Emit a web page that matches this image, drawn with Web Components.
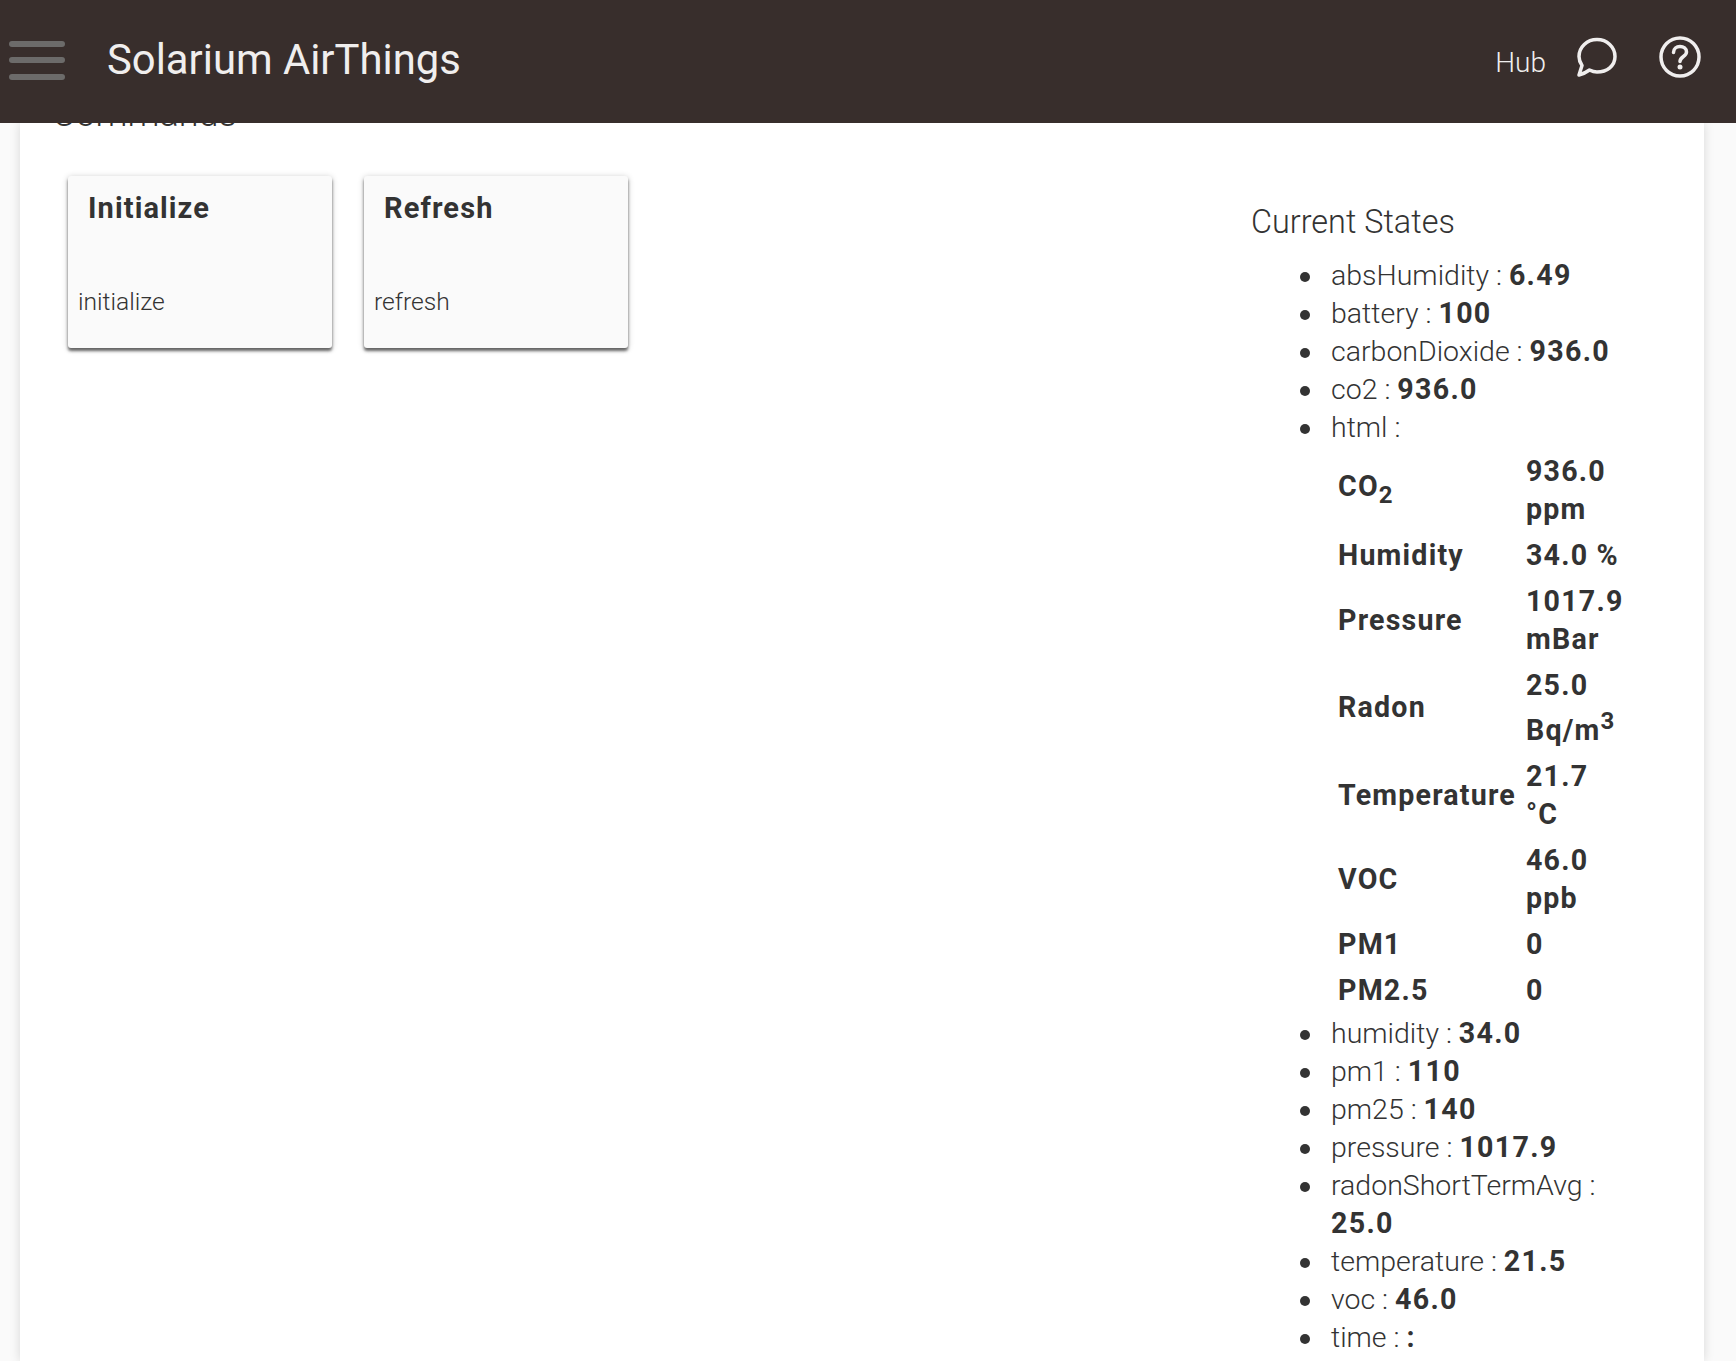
<!DOCTYPE html>
<html>
<head>
<meta charset="utf-8">
<title>Solarium AirThings</title>
<style>
  html, body { margin: 0; height: 100%; }
  body { overflow: hidden; background: #fafafa; font-family: Roboto, "Liberation Sans", sans-serif; color: #333; display: flex; flex-direction: column; }
</style>
</head>
<body>
<app-header title-text="Solarium AirThings" hub="Hub"></app-header>
<device-panel>
  <command-card slot="commands" name="Initialize" command="initialize"></command-card>
  <command-card slot="commands" name="Refresh" command="refresh"></command-card>
  <state-list slot="states">
    <state-item name="absHumidity" value="6.49"></state-item>
    <state-item name="battery" value="100"></state-item>
    <state-item name="carbonDioxide" value="936.0"></state-item>
    <state-item name="co2" value="936.0"></state-item>
    <state-item name="html" value=""></state-item>
    <air-table></air-table>
    <state-item name="humidity" value="34.0"></state-item>
    <state-item name="pm1" value="110"></state-item>
    <state-item name="pm25" value="140"></state-item>
    <state-item name="pressure" value="1017.9"></state-item>
    <state-item name="radonShortTermAvg" value="25.0"></state-item>
    <state-item name="temperature" value="21.5"></state-item>
    <state-item name="voc" value="46.0"></state-item>
    <state-item name="time" value=":"></state-item>
  </state-list>
</device-panel>

<script>
class AppHeader extends HTMLElement {
  constructor() {
    super();
    this.attachShadow({ mode: 'open' });
  }

  connectedCallback() {
    const title = this.getAttribute('title-text') || '';
    const hub = this.getAttribute('hub') || '';
    this.shadowRoot.innerHTML = `
      <style>
        :host {
          display: flex;
          align-items: center;
          flex: none;
          height: 123px;
          background: #382e2c;
          color: #f0eeee;
          position: relative;
          z-index: 2;
        }
        .burger {
          display: flex;
          flex-direction: column;
          gap: 10.500px;
          width: 56px;
          margin: 0 0 3px 9px;
        }
        .burger span {
          height: 6px;
          border-radius: 3px;
          background: #6c6b6a;
        }
        .title {
          font-size: 41.800px;
          font-weight: 400;
          margin: 0 0 5px 42px;
          flex: 1;
        }
        .hub {
          font-size: 28px;
          font-weight: 300;
          margin-top: 2px;
        }
        svg { display: block; fill: none; stroke: currentColor; }
        .chat { margin: 0 42px 9px 31px; }
        .help { margin: 0 35px 9px 0; }
      </style>
      <div class="burger"><span></span><span></span><span></span></div>
      <div class="title">${title}</div>
      <div class="hub">${hub}</div>
      <svg class="chat" width="40" height="40" viewBox="0 0 40 40" stroke-width="3.500" stroke-linejoin="round">
        <path d="M2 38 L5 28.500 C3 25.500 2 23 2 19.500 C2 10 10 2.500 20 2.500 C30 2.500 38 10 38 19.500 C38 29 30 35 20 35 C16.500 35 14.500 34 12.500 33 C9 35.500 6 37 2 38 Z"/>
      </svg>
      <svg class="help" width="42" height="42" viewBox="0 0 42 42" stroke-width="3.500" stroke-linecap="round">
        <circle cx="21" cy="21" r="19"/>
        <path d="M14.500 16.500 C14.500 12.500 17.500 10.500 21 10.500 C24.500 10.500 27.500 12.500 27.500 16 C27.500 20.500 21 20.500 21 25.500"/>
        <circle cx="21" cy="31" r="2.500" fill="currentColor" stroke="none"/>
      </svg>
    `;
  }
}
customElements.define('app-header', AppHeader);

class DevicePanel extends HTMLElement {
  constructor() {
    super();
    this.attachShadow({ mode: 'open' });
    this.shadowRoot.innerHTML = `
      <style>
        :host {
          display: block;
          flex: 1;
          min-height: 0;
          overflow: hidden;
          padding: 0 32px 0 20px;
        }
        .panel {
          background: #fff;
          height: 100%;
          box-shadow: 0 0 10px rgba(0,0,0,.14);
          display: flex;
          padding: 0 62px 0 32px;
          box-sizing: border-box;
        }
        .left { flex: 1; }
        h2 {
          font-size: 36px;
          font-weight: 300;
          line-height: 44px;
          margin: -31px 0 0 0;
          color: #333;
        }
        .cards {
          display: flex;
          gap: 32px;
          margin: 40px 0 0 16px;
        }
        .right { width: 390px; padding-top: 77px; }
        h3 {
          font-size: 32.400px;
          font-weight: 300;
          line-height: 44px;
          margin: 0 0 13px -1px;
          color: #333;
        }
      </style>
      <div class="panel">
        <div class="left">
          <h2>Commands</h2>
          <div class="cards"><slot name="commands"></slot></div>
        </div>
        <div class="right">
          <h3>Current States</h3>
          <slot name="states"></slot>
        </div>
      </div>
    `;
  }
}
customElements.define('device-panel', DevicePanel);

class CommandCard extends HTMLElement {
  constructor() {
    super();
    this.attachShadow({ mode: 'open' });
  }

  connectedCallback() {
    const name = this.getAttribute('name') || '';
    const command = this.getAttribute('command') || '';
    this.shadowRoot.innerHTML = `
      <style>
        :host {
          display: block;
          width: 264px;
          height: 172px;
          box-sizing: border-box;
          background: #fafafa;
          border-radius: 3px;
          box-shadow: 0 3px 3px rgba(0,0,0,.55), 0 1px 6px rgba(0,0,0,.22);
          padding: 13px 10px;
        }
        .name {
          font-size: 29px;
          font-weight: 700;
          letter-spacing: 1.100px;
          line-height: 38px;
          margin-left: 10px;
        }
        .cmd {
          font-size: 24.600px;
          font-weight: 300;
          line-height: 30px;
          margin-top: 60px;
        }
      </style>
      <div class="name">${name}</div>
      <div class="cmd">${command}</div>
    `;
  }
}
customElements.define('command-card', CommandCard);

class StateList extends HTMLElement {
  constructor() {
    super();
    this.attachShadow({ mode: 'open' });
    this.shadowRoot.innerHTML = `
      <style>
        :host { display: block; padding-left: 79px; }
      </style>
      <slot></slot>
    `;
  }
}
customElements.define('state-list', StateList);

class StateItem extends HTMLElement {
  constructor() {
    super();
    this.attachShadow({ mode: 'open' });
  }

  connectedCallback() {
    const name = this.getAttribute('name') || '';
    const value = this.getAttribute('value') || '';
    this.shadowRoot.innerHTML = `
      <style>
        :host {
          display: block;
          font-size: 28.500px;
          font-weight: 300;
          line-height: 38px;
          color: #333;
        }
        .dot {
          display: inline-block;
          width: 10px;
          height: 10px;
          border-radius: 50%;
          background: #333;
          margin: 0 21px 3px -31px;
          vertical-align: baseline;
        }
        b { font-size: 28.600px; line-height: 1; font-weight: 700; letter-spacing: 1.300px; }
      </style>
      <span class="dot"></span>${name} : <b>${value}</b>
    `;
  }
}
customElements.define('state-item', StateItem);

class AirTable extends HTMLElement {
  constructor() {
    super();
    this.attachShadow({ mode: 'open' });
    this.shadowRoot.innerHTML = `
      <style>
        :host {
          display: block;
          font-size: 28.600px;
          font-weight: 700;
          letter-spacing: 1.200px;
          line-height: 38px;
          color: #333;
        }
        table { border-collapse: collapse; table-layout: fixed; width: 300px; margin: 1px 0 2px 1px; }
        td { padding: 4px 6px; }
        td:first-child { width: 180px; white-space: nowrap; padding-right: 2px; }
        sub { font-size: 24px; }
        sup { font-size: 24px; line-height: 34px; }
      </style>
      <table>
        <tr><td>CO<sub>2</sub></td><td>936.0 ppm</td></tr>
        <tr><td>Humidity</td><td>34.0 %</td></tr>
        <tr><td>Pressure</td><td>1017.9 mBar</td></tr>
        <tr><td>Radon</td><td>25.0 Bq/m<sup>3</sup></td></tr>
        <tr><td>Temperature</td><td>21.7 °C</td></tr>
        <tr><td>VOC</td><td>46.0 ppb</td></tr>
        <tr><td>PM1</td><td>0</td></tr>
        <tr><td>PM2.5</td><td>0</td></tr>
      </table>
    `;
  }
}
customElements.define('air-table', AirTable);
</script>
</body>
</html>
